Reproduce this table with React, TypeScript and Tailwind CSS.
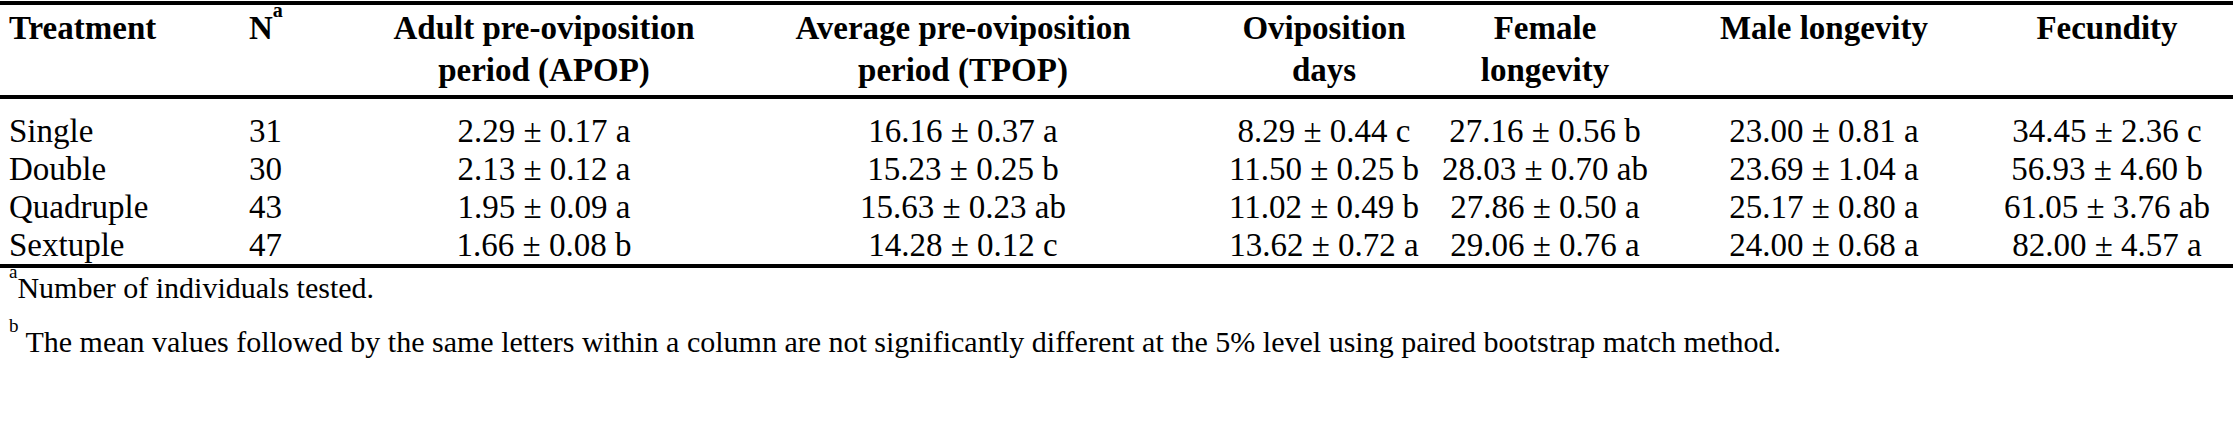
import React from "react";

const rows = [
  ["Single", "31", "2.29 ± 0.17 a", "16.16 ± 0.37 a", "8.29 ± 0.44 c", "27.16 ± 0.56 b", "23.00 ± 0.81 a", "34.45 ± 2.36 c"],
  ["Double", "30", "2.13 ± 0.12 a", "15.23 ± 0.25 b", "11.50 ± 0.25 b", "28.03 ± 0.70 ab", "23.69 ± 1.04 a", "56.93 ± 4.60 b"],
  ["Quadruple", "43", "1.95 ± 0.09 a", "15.63 ± 0.23 ab", "11.02 ± 0.49 b", "27.86 ± 0.50 a", "25.17 ± 0.80 a", "61.05 ± 3.76 ab"],
  ["Sextuple", "47", "1.66 ± 0.08 b", "14.28 ± 0.12 c", "13.62 ± 0.72 a", "29.06 ± 0.76 a", "24.00 ± 0.68 a", "82.00 ± 4.57 a"],
];

// fixed column tracks so each column's centre matches the printed table
const cols = "grid grid-cols-[240px_90px_428px_410px_312px_130px_428px_138px]";

function Center({ children }: { children: React.ReactNode }) {
  return <div className="flex justify-center whitespace-nowrap">{children}</div>;
}

export default function App() {
  return (
    <div className="w-[2233px] h-[446px] bg-white text-black font-[family-name:Liberation_Serif,serif] overflow-hidden">
      <div className="mt-[1px] border-t-4 border-b-4 border-black">
        {/* Header */}
        <div className={`${cols} pt-[2px] pb-[4px] text-[33px] leading-[42px] font-bold`}>
          <div className="pl-[9px]">Treatment</div>
          <div className="pl-[9px]">
            N<sup className="text-[20px] align-[12px] leading-none">a</sup>
          </div>
          <Center>
            <div className="text-center">
              Adult pre-oviposition
              <br />
              period (APOP)
            </div>
          </Center>
          <Center>
            <div className="text-center">
              Average pre-oviposition
              <br />
              period (TPOP)
            </div>
          </Center>
          <Center>
            <div className="text-center">
              Oviposition
              <br />
              days
            </div>
          </Center>
          <Center>
            <div className="text-center">
              Female
              <br />
              longevity
            </div>
          </Center>
          <Center>Male longevity</Center>
          <Center>Fecundity</Center>
        </div>
      </div>

      {/* Body */}
      <div className="pt-[13px] border-b-4 border-black text-[33px] leading-[38px]">
        {rows.map((r) => (
          <div key={r[0]} className={cols}>
            <div className="pl-[9px]">{r[0]}</div>
            <div className="pl-[9px]">{r[1]}</div>
            {r.slice(2).map((v, i) => (
              <Center key={i}>{v}</Center>
            ))}
          </div>
        ))}
      </div>

      {/* Footnotes */}
      <div className="pt-[3px] pl-[9px] text-[30px] leading-[34px]">
        <p>
          <sup className="text-[19px] align-[11px] leading-none">a</sup>Number of individuals tested.
        </p>
        <p className="mt-[20px]">
          <sup className="text-[19px] align-[11px] leading-none">b</sup> The mean values followed by the same letters within a column are not significantly different at the 5% level using paired bootstrap match method.
        </p>
      </div>
    </div>
  );
}
